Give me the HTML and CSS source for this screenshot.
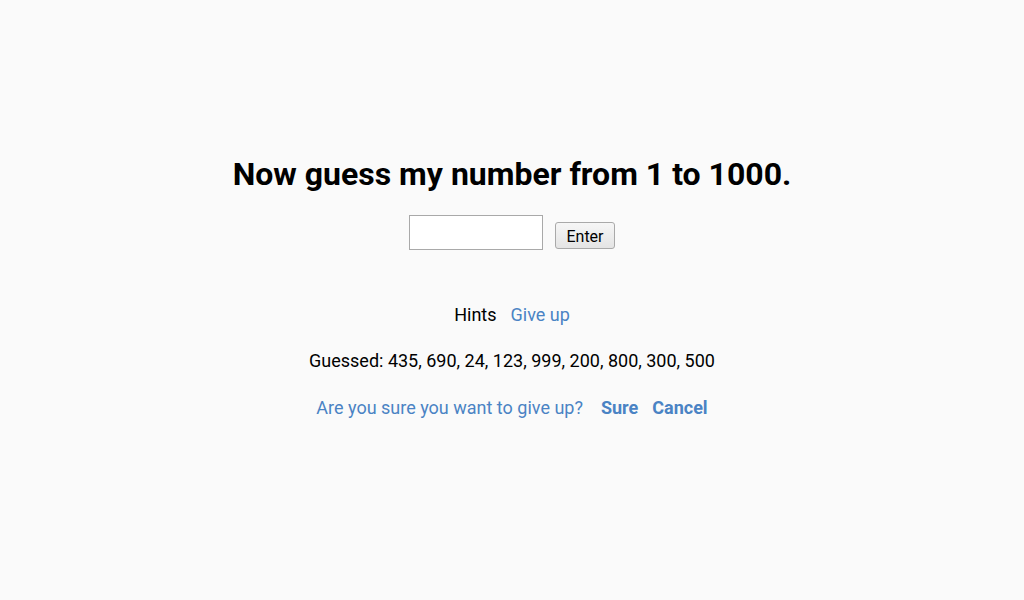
FILE: index.html
```html
<!DOCTYPE html>
<html>
<head>
<meta charset="utf-8">
<link rel="stylesheet" href="styles.css">
</head>
<body>
<main class="game">
  <h1 class="title">Now guess my number from 1 to 1000.</h1>
  <form class="guess-form">
    <input class="guess-input" type="text">
    <button class="enter-btn" type="button">Enter</button>
  </form>
  <div class="links">
    <span class="hints">Hints</span>
    <a class="link" href="#">Give up</a>
  </div>
  <p class="guessed">Guessed: 435, 690, 24, 123, 999, 200, 800, 300, 500</p>
  <div class="confirm">
    <span class="question">Are you sure you want to give up?</span>
    <a class="link bold" href="#">Sure</a>
    <a class="link bold" href="#">Cancel</a>
  </div>
</main>
</body>
</html>
```

FILE: styles.css
```css
html, body {
  margin: 0;
  padding: 0;
  background: #fafafa;
  font-family: Roboto, "Liberation Sans", sans-serif;
  color: #000;
}
.game {
  display: flex;
  flex-direction: column;
  align-items: center;
  padding-top: 155px;
}
.title {
  margin: 0;
  font-size: 32px;
  font-weight: 700;
  line-height: 38px;
}
.guess-form {
  margin-top: 22px;
  display: flex;
  align-items: flex-end;
  gap: 12px;
}
.guess-input {
  width: 134px;
  height: 35px;
  box-sizing: border-box;
  border: 1px solid #a9a9a9;
  background: #fff;
  margin: 0;
  padding: 0 4px;
}
.enter-btn {
  height: 27px;
  box-sizing: border-box;
  margin: 0 0 1px 0;
  padding: 1px 10px 0 10px;
  font-family: Roboto, "Liberation Sans", sans-serif;
  font-size: 16px;
  color: #000;
  background: linear-gradient(#f6f6f6, #e4e4e4);
  border: 1px solid #a9a9a9;
  border-radius: 3px;
}
.links {
  margin-top: 53px;
  font-size: 18px;
  line-height: 24px;
  display: flex;
  gap: 14px;
}
.link {
  color: #4a83c4;
  text-decoration: none;
}
.bold {
  font-weight: 700;
}
.guessed {
  margin: 22px 0 0 0;
  font-size: 18px;
  line-height: 24px;
}
.confirm {
  margin-top: 23px;
  font-size: 18px;
  line-height: 24px;
  display: flex;
  gap: 14px;
}
.question {
  color: #4a83c4;
  margin-right: 4px;
}
```
